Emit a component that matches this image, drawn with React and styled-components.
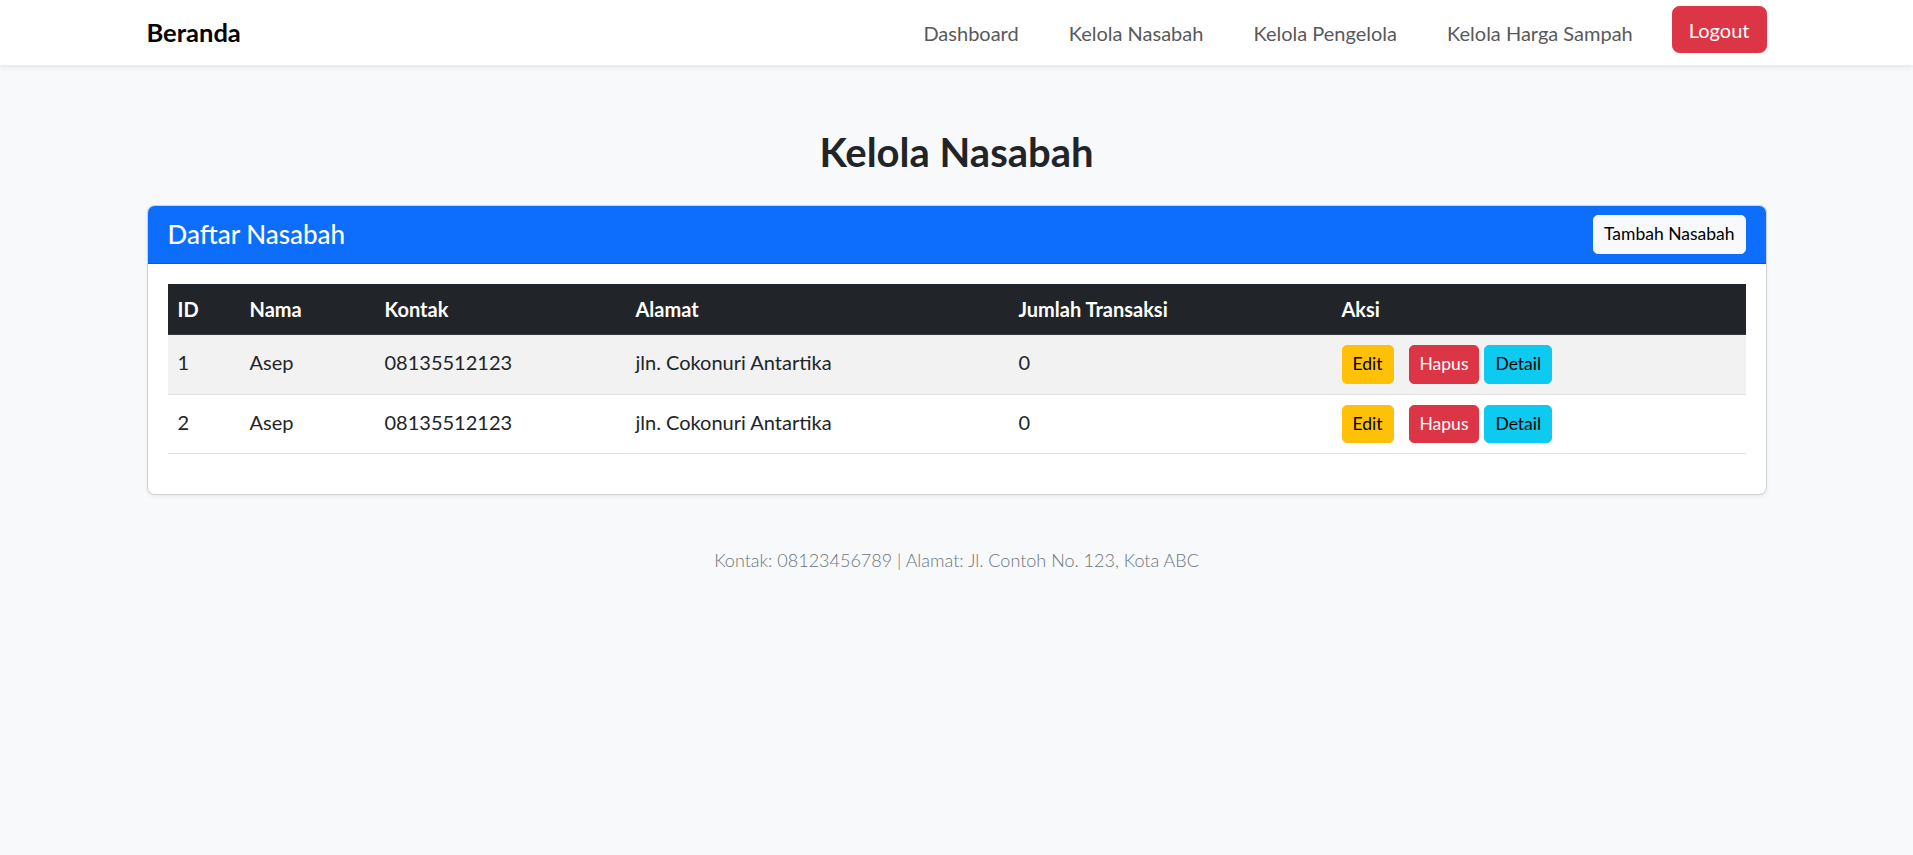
import React from 'react';
import styled, { createGlobalStyle, css } from 'styled-components';

// halaman kelola nasabah - ukuran disesuaikan ke skala 125%
const GlobalStyle = createGlobalStyle`
  * { box-sizing: border-box; }
  body {
    margin: 0;
    background: #f8f9fa;
    color: #212529;
    font-family: "Lato", "Liberation Sans", sans-serif;
    font-size: 20px;
    line-height: 1.5;
  }
`;

const Container = styled.div`
  max-width: 1620px;
  margin: 0 auto;
`;

const Navbar = styled.nav`
  height: 65px;
  background: #fff;
  box-shadow: 0 2.5px 5px rgba(0, 0, 0, 0.075);
`;

const NavInner = styled(Container)`
  height: 100%;
  display: flex;
  align-items: center;
  justify-content: space-between;
`;

const Brand = styled.a`
  font-size: 25.5px;
  font-weight: 700;
  color: #000;
  text-decoration: none;
`;

const NavList = styled.div`
  display: flex;
  align-items: center;
`;

const NavLink = styled.a`
  padding: 0 25px;
  color: #595959;
  text-decoration: none;
  font-size: 20px;
`;

const Button = styled.button`
  display: inline-block;
  border: 1px solid transparent;
  font-family: inherit;
  cursor: pointer;
  line-height: 1.5;
  ${p => p.$size === 'sm'
    ? css`
      font-size: 17.5px;
      padding: 5.25px 10px;
      border-radius: 5px;
    `
    : css`
      font-size: 20px;
      padding: 7.5px 16px;
      border-radius: 7.5px;
    `}
  ${p => p.$variant === 'danger' && css`background: #dc3545; border-color: #dc3545; color: #fff;`}
  ${p => p.$variant === 'warning' && css`background: #ffc107; border-color: #ffc107; color: #000;`}
  ${p => p.$variant === 'info' && css`background: #0dcaf0; border-color: #0dcaf0; color: #000;`}
  ${p => p.$variant === 'light' && css`background: #f8f9fa; border-color: #f8f9fa; color: #000;`}
  margin-right: ${p => p.$gap || 0}px;
`;

const LogoutButton = styled(Button)`
  margin-left: 14px;
  margin-bottom: 6px;
`;

const Title = styled.h2`
  margin: 63px 0 29px;
  text-align: center;
  font-size: 40px;
  font-weight: 700;
  line-height: 1.2;
`;

const Card = styled.div`
  background: #fff;
  border: 1px solid rgba(0, 0, 0, 0.175);
  border-radius: 7.5px;
  box-shadow: 0 2px 4px rgba(0, 0, 0, 0.06);
  overflow: hidden;
`;

const CardHeader = styled.div`
  display: flex;
  align-items: center;
  justify-content: space-between;
  padding: 9px 20px;
  background: #0d6efd;
  color: #fff;
  border-bottom: 1px solid rgba(0, 0, 0, 0.175);
`;

const CardTitle = styled.h5`
  margin: 0;
  font-size: 26px;
  font-weight: 500;
  line-height: 1.2;
`;

const CardBody = styled.div`
  padding: 20px;
`;

const Table = styled.table`
  width: 100%;
  border-collapse: collapse;
  table-layout: fixed;
  margin-bottom: 20px;
`;

const Col = styled.col`
  width: ${p => (p.$w ? `${p.$w}px` : 'auto')};
`;

const Th = styled.th`
  padding: 10px;
  background: #212529;
  color: #fff;
  text-align: left;
  font-weight: 700;
  border-bottom: 1px solid #32383e;
`;

const Tr = styled.tr`
  background: ${p => (p.$striped ? '#f2f2f2' : '#fff')};
`;

const Td = styled.td`
  padding: 10px;
  color: #212529;
  border-bottom: 1px solid #dee2e6;
  vertical-align: baseline;
`;

const Footer = styled.footer`
  padding-top: 52px;
  text-align: center;
  color: #6c757d;
  font-weight: 300;
  font-size: 18px;
`;

const nasabah = [
  { id: 1, nama: 'Asep', kontak: '08135512123', alamat: 'jln. Cokonuri Antartika', jumlah: 0 },
  { id: 2, nama: 'Asep', kontak: '08135512123', alamat: 'jln. Cokonuri Antartika', jumlah: 0 },
];

export default function App() {
  return (
    <>
      <GlobalStyle />
      <Navbar>
        <NavInner>
          <Brand href="#">Beranda</Brand>
          <NavList>
            <NavLink href="#">Dashboard</NavLink>
            <NavLink href="#">Kelola Nasabah</NavLink>
            <NavLink href="#">Kelola Pengelola</NavLink>
            <NavLink href="#">Kelola Harga Sampah</NavLink>
            <LogoutButton $variant="danger">Logout</LogoutButton>
          </NavList>
        </NavInner>
      </Navbar>

      <Container>
        <Title>Kelola Nasabah</Title>
        <Card>
          <CardHeader>
            <CardTitle>Daftar Nasabah</CardTitle>
            <Button $variant="light" $size="sm">Tambah Nasabah</Button>
          </CardHeader>
          <CardBody>
            <Table>
              <colgroup>
                <Col $w={72} />
                <Col $w={135} />
                <Col $w={251} />
                <Col $w={383} />
                <Col $w={323} />
                <Col />
              </colgroup>
              <thead>
                <tr>
                  <Th>ID</Th>
                  <Th>Nama</Th>
                  <Th>Kontak</Th>
                  <Th>Alamat</Th>
                  <Th>Jumlah Transaksi</Th>
                  <Th>Aksi</Th>
                </tr>
              </thead>
              <tbody>
                {nasabah.map((n, i) => (
                  <Tr key={n.id} $striped={i % 2 === 0}>
                    <Td>{n.id}</Td>
                    <Td>{n.nama}</Td>
                    <Td>{n.kontak}</Td>
                    <Td>{n.alamat}</Td>
                    <Td>{n.jumlah}</Td>
                    <Td>
                      <Button $variant="warning" $size="sm" $gap={15}>Edit</Button>
                      <Button $variant="danger" $size="sm" $gap={5}>Hapus</Button>
                      <Button $variant="info" $size="sm">Detail</Button>
                    </Td>
                  </Tr>
                ))}
              </tbody>
            </Table>
          </CardBody>
        </Card>
      </Container>

      <Footer>Kontak: 08123456789 | Alamat: Jl. Contoh No. 123, Kota ABC</Footer>
    </>
  );
}
